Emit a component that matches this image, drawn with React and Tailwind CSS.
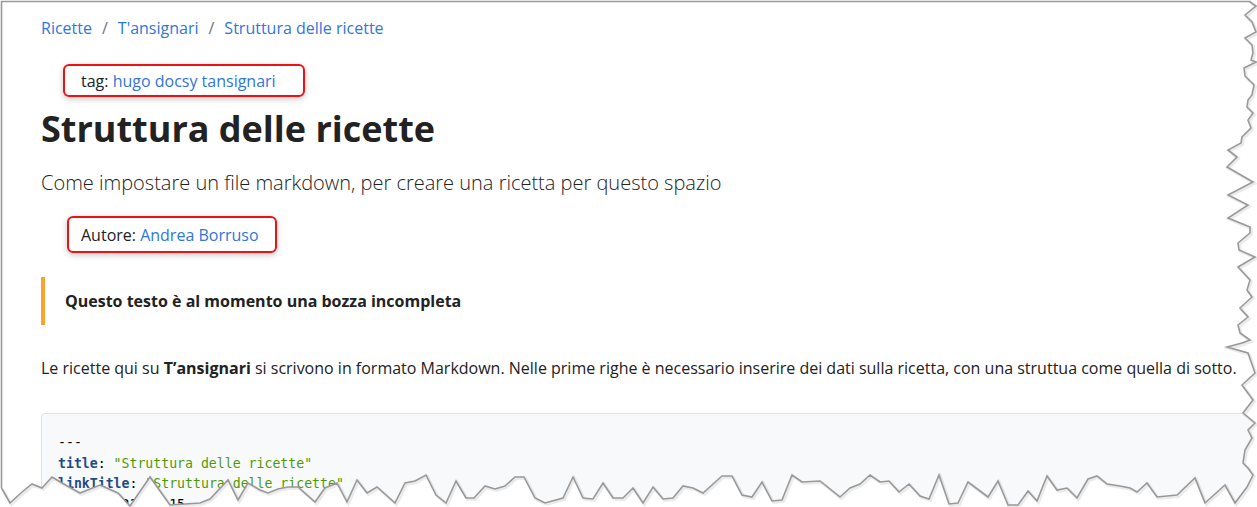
import React from "react";

// torn-paper edge: right side top -> bottom, then bottom side right -> left
const tear = [
  [1250, 2], [1256, 6], [1245, 15], [1252, 22], [1256, 32], [1245, 38], [1252, 45], [1253, 53],
  [1251, 60], [1256, 62], [1244, 68], [1245, 76], [1254, 85], [1252, 95], [1248, 100], [1247, 107],
  [1253, 113], [1248, 120], [1251, 128], [1242, 137], [1241, 143], [1228, 150], [1237, 157],
  [1227, 167], [1253, 182], [1228, 195], [1248, 205], [1228, 218], [1250, 227], [1250, 233],
  [1238, 243], [1239, 250], [1255, 257], [1238, 267], [1250, 280], [1247, 290], [1252, 297],
  [1240, 308], [1248, 317], [1238, 325], [1240, 333], [1250, 340], [1242, 343], [1227, 347],
  [1248, 353], [1255, 373], [1242, 385], [1253, 400], [1243, 413], [1255, 423], [1248, 430],
  [1252, 438], [1245, 450], [1243, 463], [1248, 468], [1253, 475], [1247, 487], [1235, 503],
  [1225, 485], [1205, 503], [1195, 478], [1177, 495], [1157, 497], [1147, 483], [1137, 492],
  [1130, 488], [1120, 486], [1107, 484], [1097, 476], [1088, 479], [1077, 498], [1067, 488],
  [1057, 490], [1047, 476], [1037, 501], [1028, 491], [1018, 505], [1008, 505], [998, 481],
  [988, 497], [968, 482], [958, 503], [949, 504], [939, 475], [929, 499], [920, 496], [909, 484],
  [899, 492], [889, 481], [880, 482], [870, 475], [860, 484], [850, 488], [840, 497], [820, 481],
  [802, 482], [792, 475], [782, 500], [772, 501], [762, 482], [752, 497], [742, 495], [732, 476],
  [722, 476], [703, 493], [693, 488], [683, 486], [673, 498], [663, 499], [653, 487], [643, 503],
  [633, 488], [623, 498], [613, 498], [603, 483], [593, 499], [583, 498], [573, 477], [563, 498],
  [545, 503], [535, 498], [524, 477], [515, 477], [505, 486], [495, 489], [485, 486], [474, 498],
  [466, 498], [456, 481], [446, 503], [436, 495], [426, 475], [415, 481], [405, 483], [395, 503],
  [377, 487], [367, 493], [357, 480], [347, 502], [337, 483], [325, 488], [315, 502], [298, 487],
  [288, 487], [278, 489], [268, 493], [260, 490], [248, 483], [238, 500], [228, 480], [210, 499],
  [200, 503], [170, 505], [150, 477], [130, 506], [118, 493], [100, 485], [80, 493], [62, 483],
  [52, 477], [42, 488], [32, 484], [22, 492], [10, 503], [1.5, 488],
];

const tearPts = tear.map((p) => p.join(",")).join(" ");
const outside = `M1250,1 L${tear.map((p) => p.join(",")).join(" L")} L0,488 L0,507 L1257,507 L1257,0 Z`;

const TornEdge = () => (
  <svg className="absolute inset-0 pointer-events-none" width="1257" height="507" viewBox="0 0 1257 507">
    <path d={outside} fill="#ffffff" />
    <polyline points={tearPts} fill="none" stroke="#000" strokeOpacity="0.08" strokeWidth="3" transform="translate(1.5,1.5)" />
    <polyline points={`1.5,488 1.5,1.5 1250,1.5 ${tearPts}`} fill="none" stroke="#999999" strokeWidth="1.6" strokeLinejoin="miter" />
  </svg>
);

const Link = ({ children }) => <span className="text-[#3176d9]">{children}</span>;

const Sep = () => <span className="mx-[10px] text-[#6c757d]">/</span>;

export default function App() {
  return (
    <div className="relative w-[1257px] h-[507px] overflow-hidden bg-white text-[#222222] font-['Open_Sans',sans-serif]">
      <div className="pl-[41px] pt-[16px]">
        {/* Breadcrumb */}
        <nav className="flex items-center h-[24px] text-[16px] leading-[24px]">
          <Link>Ricette</Link>
          <Sep />
          <Link>T'ansignari</Link>
          <Sep />
          <Link>Struttura delle ricette</Link>
        </nav>

        {/* tag annotation */}
        <div className="mt-[24px] ml-[22px] w-[242px] h-[33px] flex items-center pl-[16px] border-2 border-[#ee1111] rounded-[6px] shadow-[0_2px_6px_rgba(0,0,0,0.22)] text-[16px]">
          <span>tag:&nbsp;</span>
          <Link>hugo docsy tansignari</Link>
        </div>

        <h1 className="mt-[10px] text-[36px] leading-[44px] font-bold">Struttura delle ricette</h1>

        <p className="mt-[17px] text-[20px] leading-[30px] font-light">
          Come impostare un file markdown, per creare una ricetta per questo spazio
        </p>

        {/* author annotation */}
        <div className="mt-[18px] ml-[26px] w-[210px] h-[37px] flex items-center pl-[12px] border-2 border-[#ee1111] rounded-[6px] shadow-[0_2px_6px_rgba(0,0,0,0.22)] text-[16px]">
          <span>Autore:&nbsp;</span>
          <Link>Andrea Borruso</Link>
        </div>

        {/* draft alert */}
        <div className="mt-[24px] h-[48px] flex items-center pl-[20px] border-l-4 border-[#f7a531] text-[16px] font-bold">
          Questo testo è al momento una bozza incompleta
        </div>

        <p className="mt-[31px] text-[16px] leading-[24px] whitespace-nowrap">
          Le ricette qui su <b>T’ansignari</b> si scrivono in formato Markdown. Nelle prime righe è necessario inserire dei dati sulla ricetta, con una struttua come quella di sotto.
        </p>

        {/* front matter */}
        <pre className="mt-[33px] w-[1220px] h-[200px] pt-[19px] pl-[16px] bg-[#f8f9fa] border border-[#dee2e6] rounded-[4px] font-['DejaVu_Sans_Mono',monospace] text-[13.2px] leading-[20.5px] text-[#000]">
          <div>---</div>
          <div>
            <span className="text-[#204a87] font-bold">title</span>: <span className="text-[#4e9a06]">"Struttura delle ricette"</span>
          </div>
          <div>
            <span className="text-[#204a87] font-bold">linkTitle</span>: <span className="text-[#4e9a06]">"Struttura delle ricette"</span>
          </div>
          <div>
            <span className="text-[#204a87] font-bold">date</span>: 2021-05-15
          </div>
        </pre>
      </div>
      <TornEdge />
    </div>
  );
}
